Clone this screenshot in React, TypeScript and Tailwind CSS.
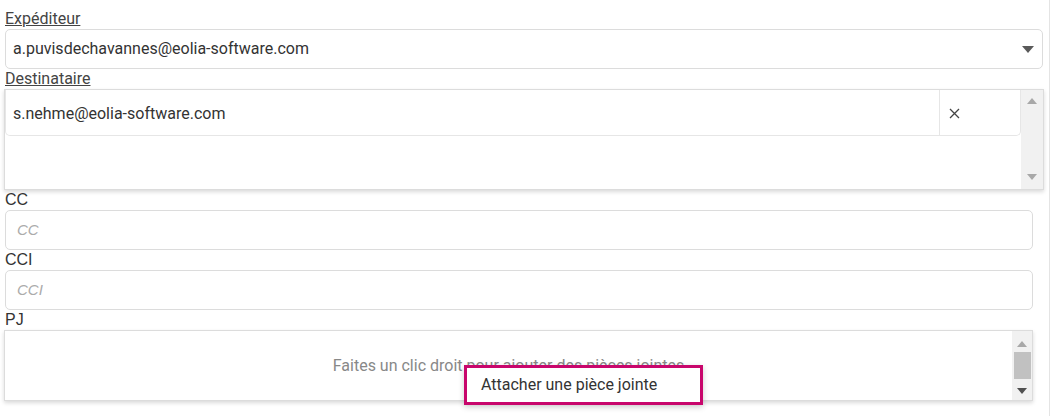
import React from "react";

const roboto = { fontFamily: "Roboto, 'Liberation Sans', sans-serif" };
const arial = { fontFamily: "'Liberation Sans', Arial, sans-serif" };

function Up({ color }: { color: string }) {
  return (
    <svg width="10" height="6" viewBox="0 0 10 6">
      <polygon points="0,6 10,6 5,0" fill={color} />
    </svg>
  );
}
function Down({ color }: { color: string }) {
  return (
    <svg width="10" height="6" viewBox="0 0 10 6">
      <polygon points="0,0 10,0 5,6" fill={color} />
    </svg>
  );
}

export default function App() {
  return (
    <div className="w-[1050px] h-[416px] bg-white border-r border-[#e4e4e4] relative" style={roboto}>
      <div className="flex flex-col pt-[9px] pl-[4px] text-[16px] text-[#333]">
        <div className="h-[20px] leading-[20px] pl-[1px] underline text-[#444]">Expéditeur</div>
        <div className="ml-[1px] w-[1038px] h-[40px] border border-[#dcdcdc] rounded-[5px] flex items-center justify-between pl-[7px] pr-[8px]">
          <span>a.puvisdechavannes@eolia-software.com</span>
          <svg width="12" height="7" viewBox="0 0 12 7">
            <polygon points="0,0 12,0 6,7" fill="#5a5a5a" />
          </svg>
        </div>
        <div className="h-[20px] leading-[20px] pl-[1px] underline text-[#444]">Destinataire</div>
        <div className="w-[1040px] h-[101px] border border-[#dcdcdc] shadow-[0_2px_4px_rgba(0,0,0,0.15)] flex">
          <div className="flex-1 flex flex-col">
            <div className="h-[46px] border border-t-0 border-[#e6e6e6] rounded-b-[5px] flex items-stretch">
              <div className="flex-1 flex items-center pl-[7px] pt-[2px]">s.nehme@eolia-software.com</div>
              <div className="w-[81px] border-l border-[#e6e6e6] flex items-center pl-[9px] pt-[2px]">
                <svg width="11" height="11" viewBox="0 0 11 11">
                  <path d="M1 1 L10 10 M10 1 L1 10" stroke="#444" strokeWidth="1.3" />
                </svg>
              </div>
            </div>
          </div>
          <div className="w-[22px] bg-[#f1f1f1] flex flex-col items-center justify-between pt-[8px] pb-[9px]">
            <Up color="#a8a8a8" />
            <Down color="#a8a8a8" />
          </div>
        </div>
        <div className="h-[20px] leading-[20px] pl-[1px] text-[#333]" style={arial}>CC</div>
        <div className="ml-[1px] w-[1028px] h-[40px] border border-[#dcdcdc] rounded-[5px] flex items-center pl-[11px]">
          <span className="italic text-[15px] text-[#ababab]" style={arial}>CC</span>
        </div>
        <div className="h-[20px] leading-[20px] pl-[1px] text-[#333]" style={arial}>CCI</div>
        <div className="ml-[1px] w-[1028px] h-[40px] border border-[#dcdcdc] rounded-[5px] flex items-center pl-[11px]">
          <span className="italic text-[15px] text-[#ababab]" style={arial}>CCI</span>
        </div>
        <div className="h-[20px] leading-[20px] pl-[1px] text-[#333]" style={arial}>PJ</div>
        <div className="w-[1029px] h-[71px] border border-[#dcdcdc] shadow-[0_2px_4px_rgba(0,0,0,0.15)] flex">
          <div className="flex-1 flex items-center justify-center text-[#888]">
            Faites un clic droit pour ajouter des pièces jointes
          </div>
          <div className="w-[20px] bg-[#f1f1f1] flex flex-col items-center pt-[10px] pb-[6px]">
            <Up color="#a8a8a8" />
            <div className="w-[17px] h-[27px] bg-[#c1c1c1] mt-[5px]" />
            <div className="mt-auto">
              <Down color="#505050" />
            </div>
          </div>
        </div>
      </div>
      <div className="absolute left-[464px] top-[365px] w-[239px] h-[40px] bg-white border-[3px] border-[#c8066c] shadow-[0_2px_6px_rgba(0,0,0,0.2)] flex items-center pl-[14px] text-[16px] text-[#333]">
        Attacher une pièce jointe
      </div>
    </div>
  );
}
